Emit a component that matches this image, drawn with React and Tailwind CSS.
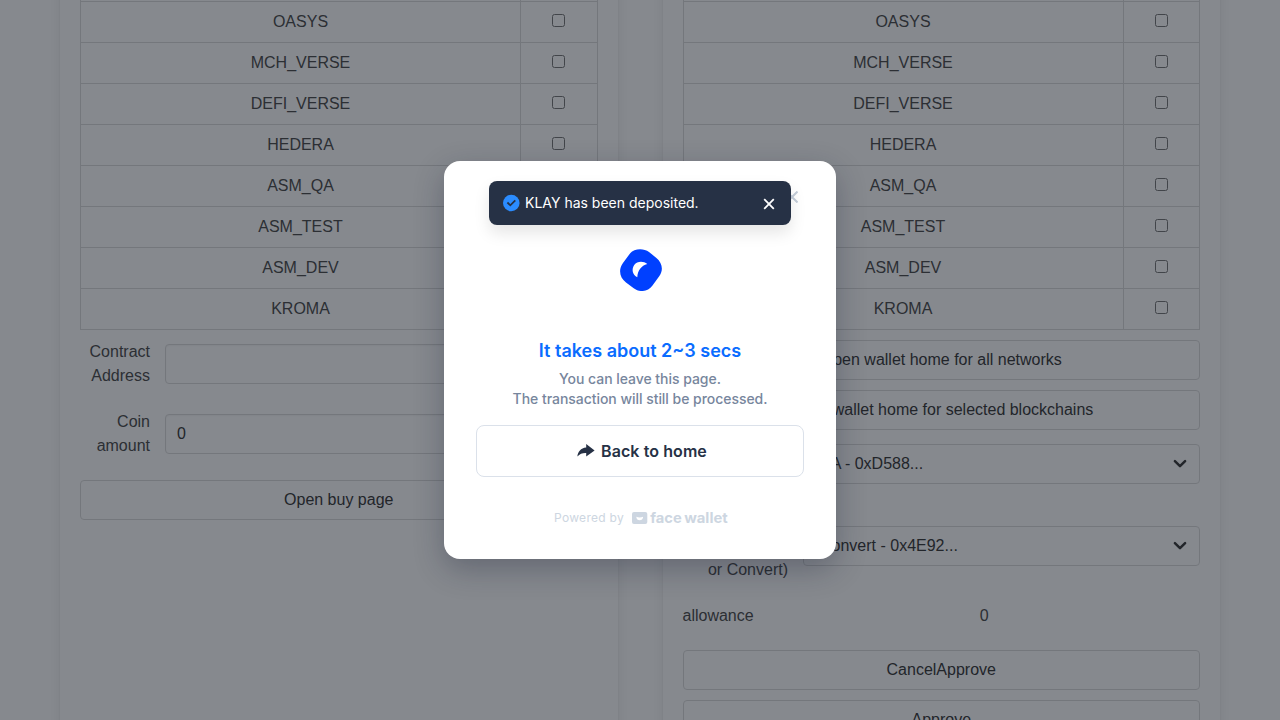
const NETWORKS = ['OASYS', 'MCH_VERSE', 'DEFI_VERSE', 'HEDERA', 'ASM_QA', 'ASM_TEST', 'ASM_DEV', 'KROMA'];

function Card({ children }) {
  return (
    <section className="h-[900px] w-[557.5px] shrink-0 rounded-md bg-white px-5 pt-10 text-[#4a4a4a] shadow-[0_8px_16px_-2px_rgba(10,10,10,0.1),0_0_0_1px_rgba(10,10,10,0.02)]">
      {children}
    </section>
  );
}

function NetworkTable() {
  return (
    <div className="border-l border-[#dbdbdb]">
      <div className="border-y border-[#dbdbdb]">
        <div className="flex h-px border-r border-[#dbdbdb]">
          <div className="flex-1 border-r border-[#dbdbdb]" />
          <div className="w-[75.5px]" />
        </div>
        {NETWORKS.map((name) => (
          <div key={name} className="flex h-[41px] border-t border-[#dbdbdb]">
            <div className="flex-1 border-r border-[#dbdbdb] pt-2 text-center">{name}</div>
            <div className="flex w-[76.5px] justify-center border-r border-[#dbdbdb] pt-3">
              <input type="checkbox" className="size-[13px]" />
            </div>
          </div>
        ))}
      </div>
    </div>
  );
}

function PlainButton({ children, className = '' }) {
  return (
    <button className={`flex h-10 w-full items-center justify-center rounded border border-[#dbdbdb] bg-white text-[#363636] ${className}`}>
      {children}
    </button>
  );
}

function Field({ label, value, className = '' }) {
  return (
    <div className={`flex h-12 items-center ${className}`}>
      <div className="w-[70px] text-right">{label}</div>
      <div className="ml-[15px] flex h-10 flex-1 items-center rounded border border-[#dbdbdb] px-[11px] text-[#363636] shadow-[inset_0_1px_2px_rgba(10,10,10,0.05)]">
        {value}
      </div>
    </div>
  );
}

function SelectBox({ children }) {
  return (
    <div className="flex h-10 w-[397px] items-center justify-between rounded border border-[#dbdbdb] pr-3 pl-4 text-[#363636]">
      <span>{children}</span>
      <svg width="14" height="10" viewBox="0 0 14 10" fill="none" stroke="#363636" strokeWidth="2.5" strokeLinecap="round" strokeLinejoin="round">
        <path d="M1.9 2.2 7 7.2 12.1 2.2" />
      </svg>
    </div>
  );
}

function Toast() {
  return (
    <div className="absolute top-5 left-[45px] flex h-11 w-[302px] items-center rounded-lg bg-[#263145] pr-4 pl-[13.5px] shadow-[0_8px_16px_rgba(0,0,0,0.1)]">
      <svg className="-mt-px" width="17" height="18" viewBox="0 0 17 18" fill="none">
        <circle cx="8.3" cy="9" r="8.3" fill="#2b8cff" />
        <path d="M4.4 8.5 7.3 11.3 12.3 6.4" stroke="#263145" strokeWidth="1.8" />
      </svg>
      <span className="ml-[5.5px] flex-1 text-sm text-white">KLAY has been deposited.</span>
      <svg className="mt-0.5" width="12" height="12" viewBox="0 0 12 12" stroke="#fff" strokeWidth="1.8">
        <path d="M1.2 1.2 10.8 10.8M10.8 1.2 1.2 10.8" />
      </svg>
    </div>
  );
}

function Modal() {
  return (
    <div className="relative flex h-[398px] w-[392px] flex-col items-center rounded-2xl bg-white px-8 font-['Inter',sans-serif] shadow-[0_10px_30px_rgba(20,28,50,0.3)]">
      <div className="flex w-full justify-end pt-[30px] pr-1.5">
        <svg width="12" height="12" viewBox="0 0 12 12" stroke="#c3ccd8" strokeWidth="2">
          <path d="M.5.5 11.5 11.5M11.5.5.5 11.5" />
        </svg>
      </div>
      <svg className="mt-[46px] ml-px shrink-0" width="42" height="42" viewBox="0 0 42 42">
        <path fill="#0040ff" d="M10.2 4.2C14-.5 23.5-1.3 29 3L36.4 8.9C42.3 13.6 43.6 21.2 39.4 27L32.5 36.4C28 42.7 19.8 43.8 13.7 39.3L6 33.6C-.4 28.8-1.8 20.6 2.8 14.2Z" />
        <path fill="#fff" d="M27.3 15.1C23.4 11.6 17.2 12 14.2 15.9 11.2 20.1 12.6 26 17.3 28.2 17.7 21.6 21.2 16.8 27.3 15.1Z" />
      </svg>
      <h2 className="mt-[46px] text-lg leading-7 font-semibold whitespace-nowrap text-[#0a6cff]">It takes about 2~3 secs</h2>
      <p className="mt-1 text-center text-sm leading-5 font-medium tracking-[-0.04px] whitespace-nowrap text-[#77869d]">
        You can leave this page.
        <br />
        The transaction will still be processed.
      </p>
      <button className="mt-4 flex h-[52px] w-full shrink-0 items-center justify-center rounded-lg border border-[#dbe1ea] text-base font-semibold tracking-[0.08px] text-[#263145]">
        <svg className="mr-1.5 ml-1" width="18" height="14" viewBox="0 0 18 14" fill="#263145">
          <path d="M9.2 0 17.6 6.4 9.2 12.6V9.1C5.6 8.9 2.8 10 .4 12.6.8 7.8 3.8 4.1 9.2 3.6Z" />
        </svg>
        Back to home
      </button>
      <div className="mt-8 flex h-[18px] w-full items-center pl-[78px] text-[#cdd6e1]">
        <span className="w-[78px] text-xs tracking-[0.3px]">Powered by</span>
        <svg width="97" height="18" viewBox="0 0 97 18" fill="#cdd6e1">
          <rect x="0" y="3" width="15.3" height="12" rx="2" />
          <path fill="#fff" d="M4.3 7.7C6.5 8.7 8.9 8.7 11.1 7.7 11.2 12.5 4.2 12.5 4.3 7.7Z" />
          <g fontFamily="Inter, sans-serif" fontWeight="700" fontSize="14.5">
            <text x="18.2" y="14.2" textLength="31.5" lengthAdjust="spacingAndGlyphs">face</text>
            <text x="52.2" y="14.2" textLength="43.5" lengthAdjust="spacingAndGlyphs">wallet</text>
          </g>
        </svg>
      </div>
    </div>
  );
}

export default function App() {
  return (
    <div className="relative h-[720px] w-[1280px] overflow-hidden bg-white font-['Liberation_Sans',sans-serif] text-base leading-6">
      <div className="h-full overflow-hidden">
        <main className="-mt-[41px] flex gap-[45px] pl-[60px]">
          <Card>
            <NetworkTable />
            <Field className="mt-[10px]" label={<>Contract<br />Address</>} value="" />
            <Field className="mt-[22px]" label={<>Coin<br />amount</>} value="0" />
            <PlainButton className="mt-[22px]">Open buy page</PlainButton>
          </Card>
          <Card>
            <NetworkTable />
            <PlainButton className="mt-[10px]">Open wallet home for all networks</PlainButton>
            <PlainButton className="mt-[10px]">Open wallet home for selected blockchains</PlainButton>
            <div className="mt-[14px] flex justify-end">
              <SelectBox>KA - 0xD588...</SelectBox>
            </div>
            <div className="mt-[42px] flex h-14 justify-between">
              <div className="w-[105.5px] pt-2 text-right">(Approve<br />or Convert)</div>
              <SelectBox>Convert - 0x4E92...</SelectBox>
            </div>
            <div className="mt-[22px] flex">
              <span className="w-[86px]">allowance</span>
              <span className="flex-1 text-center">0</span>
            </div>
            <PlainButton className="mt-[22px]">CancelApprove</PlainButton>
            <PlainButton className="mt-[10px]">Approve</PlainButton>
          </Card>
        </main>
      </div>
      <div className="absolute inset-0 flex items-center justify-center bg-[rgba(14,20,30,0.5)]">
        <div className="relative font-['Inter',sans-serif]">
          <Modal />
          <Toast />
        </div>
      </div>
    </div>
  );
}
